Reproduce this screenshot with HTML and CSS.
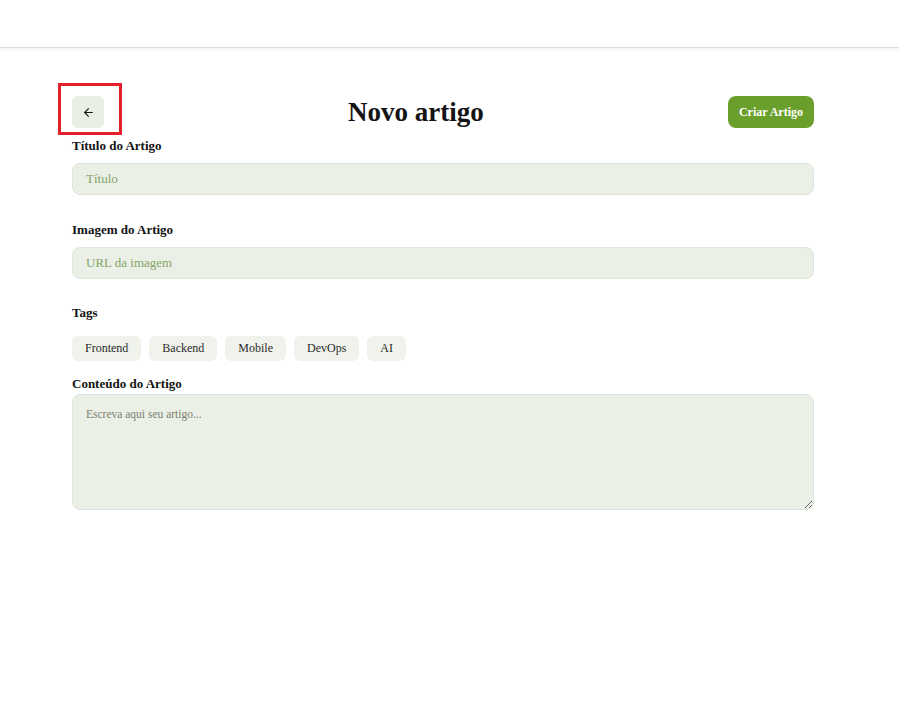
FILE: index.html
```html
<!DOCTYPE html>
<html lang="pt-BR">
<head>
<meta charset="utf-8">
<title>Novo artigo</title>
<link rel="stylesheet" href="styles.css">
</head>
<body>
<header class="topbar"></header>
<main class="page">
  <div class="head-row">
    <button class="back-btn" aria-label="Voltar">
      <svg width="13" height="13" viewBox="0 0 24 24" fill="none" stroke="#111" stroke-width="2" stroke-linecap="round" stroke-linejoin="round"><path d="M19 12H5"/><path d="M12 19l-7-7 7-7"/></svg>
    </button>
    <h1 class="title">Novo artigo</h1>
    <button class="create-btn">Criar Artigo</button>
  </div>
  <form class="form">
    <div class="field">
      <label class="label">Título do Artigo</label>
      <input class="input" type="text" placeholder="Título">
    </div>
    <div class="field field-img">
      <label class="label">Imagem do Artigo</label>
      <input class="input" type="text" placeholder="URL da imagem">
    </div>
    <div class="field field-tags">
      <label class="label">Tags</label>
      <div class="tags">
        <span class="tag">Frontend</span>
        <span class="tag">Backend</span>
        <span class="tag">Mobile</span>
        <span class="tag">DevOps</span>
        <span class="tag">AI</span>
      </div>
    </div>
    <div class="field field-content">
      <label class="label">Conteúdo do Artigo</label>
      <textarea class="textarea" placeholder="Escreva aqui seu artigo..."></textarea>
    </div>
  </form>
</main>
<div class="highlight"></div>
</body>
</html>
```
FILE: styles.css
```css
* { box-sizing: border-box; }
html, body { margin: 0; padding: 0; background: #fff; }
body {
  font-family: "Liberation Serif", "Times New Roman", serif;
  color: #1a1a1a;
  position: relative;
  min-height: 706px;
}
.topbar {
  height: 47px;
  background: #fff;
  box-shadow: 0 1px 0 #dcdcdc, 0 2px 4px rgba(0,0,0,0.08);
}
.page {
  margin-left: 72px;
  width: 742px;
  padding-top: 49px;
}
.head-row {
  display: flex;
  justify-content: space-between;
  align-items: center;
  height: 32px;
}
.back-btn {
  width: 32px;
  height: 32px;
  border: none;
  border-radius: 6px;
  background: #e9eee4;
  display: flex;
  align-items: center;
  justify-content: center;
  padding: 0;
}
.title {
  margin: 0;
  font-size: 27px;
  font-weight: 700;
  color: #141414;
  line-height: 32px;
}
.create-btn {
  height: 32px;
  padding: 0 11px;
  border: none;
  border-radius: 8px;
  background: #6a9f2c;
  color: #fff;
  font-family: inherit;
  font-weight: 700;
  font-size: 12px;
}
.form {
  display: flex;
  flex-direction: column;
  margin-top: 9px;
}
.field {
  display: flex;
  flex-direction: column;
  gap: 8px;
}
.label {
  font-size: 13px;
  font-weight: 700;
  line-height: 18px;
  color: #141414;
}
.input {
  height: 32px;
  border: 1px solid #dfe5d9;
  border-radius: 8px;
  background: #ebf0e6;
  padding: 0 13px;
  font-family: inherit;
  font-size: 13px;
  color: #333;
}
.input::placeholder { color: #86a468; }
.field-img { margin-top: 26px; }
.field-tags { margin-top: 25px; gap: 14px; }
.tags {
  display: flex;
  gap: 8px;
}
.tag {
  height: 25px;
  line-height: 25px;
  padding: 0 13px;
  border-radius: 6px;
  background: #f0f3ec;
  font-size: 12px;
  color: #2a2a2a;
}
.field-content { margin-top: 14px; gap: 1px; }
.textarea {
  height: 116px;
  border: 1px solid #dfe5d9;
  border-radius: 8px;
  background: #ebf0e6;
  padding: 13px 13px;
  font-family: inherit;
  font-size: 11.5px;
  color: #333;
  resize: vertical;
}
.textarea::placeholder { color: #7c7f6e; }
.highlight {
  position: absolute;
  left: 58px;
  top: 83px;
  width: 64px;
  height: 52px;
  border: 3px solid #e3202a;
  pointer-events: none;
}
```
